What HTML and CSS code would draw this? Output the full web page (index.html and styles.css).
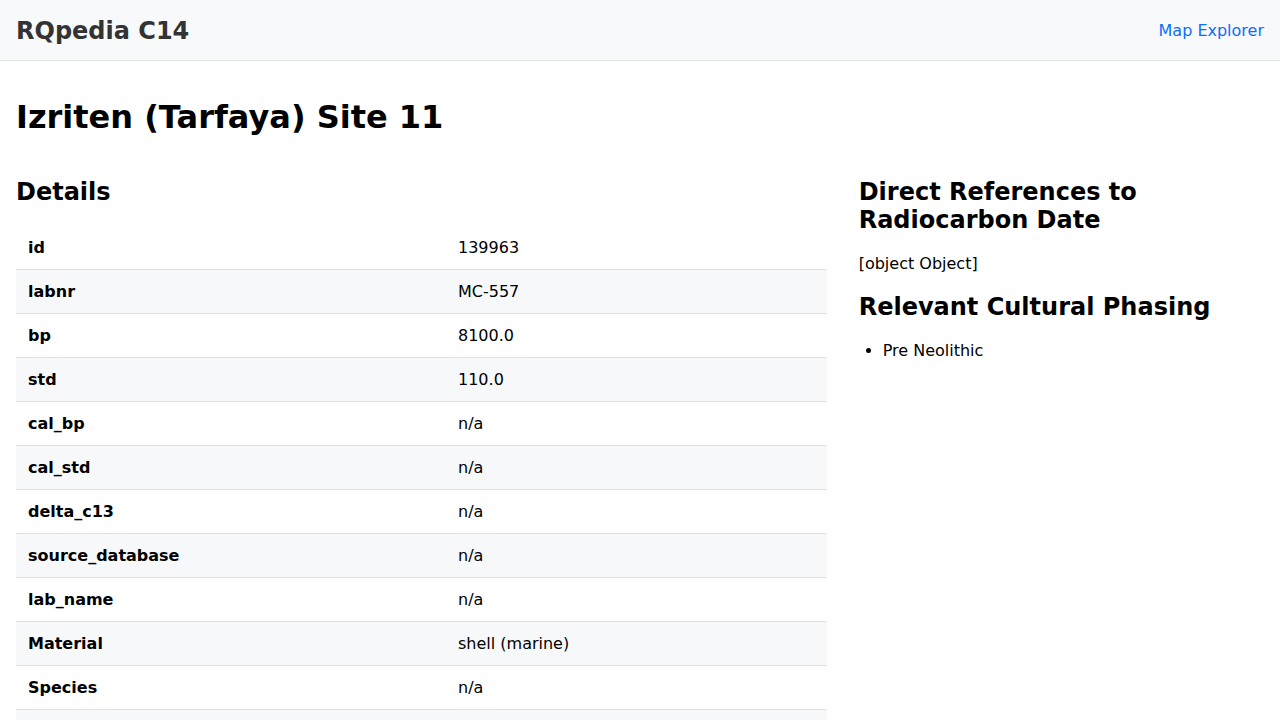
FILE: index.html
```html
<!DOCTYPE html>
<html lang="en">
<head>
<meta charset="utf-8">
<title>RQpedia C14</title>
<link rel="stylesheet" href="styles.css">
</head>
<body>
<nav class="navbar">
  <a class="brand" href="#">RQpedia C14</a>
  <a class="nav-link" href="#">Map Explorer</a>
</nav>
<main class="container">
  <h1 class="title">Izriten (Tarfaya) Site 11</h1>
  <div class="layout">
    <section class="main-col">
      <h2 class="heading">Details</h2>
      <table class="details">
        <tbody>
          <tr><th>id</th><td>139963</td></tr>
          <tr><th>labnr</th><td>MC-557</td></tr>
          <tr><th>bp</th><td>8100.0</td></tr>
          <tr><th>std</th><td>110.0</td></tr>
          <tr><th>cal_bp</th><td>n/a</td></tr>
          <tr><th>cal_std</th><td>n/a</td></tr>
          <tr><th>delta_c13</th><td>n/a</td></tr>
          <tr><th>source_database</th><td>n/a</td></tr>
          <tr><th>lab_name</th><td>n/a</td></tr>
          <tr><th>Material</th><td>shell (marine)</td></tr>
          <tr><th>Species</th><td>n/a</td></tr>
          <tr><th>Country</th><td>Morocco</td></tr>
          <tr><th>Site</th><td>Izriten (Tarfaya) Site 11</td></tr>
        </tbody>
      </table>
    </section>
    <aside class="side-col">
      <h2 class="heading">Direct References to Radiocarbon Date</h2>
      <p class="text">[object Object]</p>
      <h2 class="heading">Relevant Cultural Phasing</h2>
      <ul class="list">
        <li>Pre Neolithic</li>
      </ul>
    </aside>
  </div>
</main>
</body>
</html>
```

FILE: styles.css
```css
* { box-sizing: border-box; }
html, body {
  margin: 0;
  padding: 0;
}
body {
  font-family: "DejaVu Sans", sans-serif;
  font-size: 16px;
  line-height: 1.5;
  color: #000;
  background: #fff;
}
.navbar {
  height: 61px;
  display: flex;
  align-items: center;
  justify-content: space-between;
  padding: 2px 16px 0;
  background: #f8f9fa;
  border-bottom: 1px solid #dee2e6;
}
.brand {
  font-size: 24px;
  font-weight: bold;
  color: #333;
  text-decoration: none;
  line-height: 1;
}
.nav-link {
  color: #0d6efd;
  text-decoration: none;
  font-size: 16px;
}
.container {
  padding: 37px 16px 0;
}
.title {
  margin: 0;
  font-size: 32px;
  line-height: 38px;
  font-weight: bold;
}
.layout {
  display: grid;
  grid-template-columns: 2fr 1fr;
  column-gap: 32px;
  margin-top: 42px;
}
.heading {
  margin: 0 0 18px;
  font-size: 24px;
  line-height: 28px;
  font-weight: bold;
}
.main-col .heading {
  margin-bottom: 20px;
}
.details {
  width: 100%;
  border-collapse: collapse;
}
.details th, .details td {
  padding: 10px 12px 9px;
  line-height: 24px;
  text-align: left;
  vertical-align: top;
  border-bottom: 1px solid #dee2e6;
}
.details th {
  width: 430px;
  font-weight: bold;
}
.details tr:nth-child(even) {
  background: #f7f8fa;
}
.text {
  margin: 0 0 17px;
}
.list {
  margin: 0;
  padding-left: 24px;
}
```
